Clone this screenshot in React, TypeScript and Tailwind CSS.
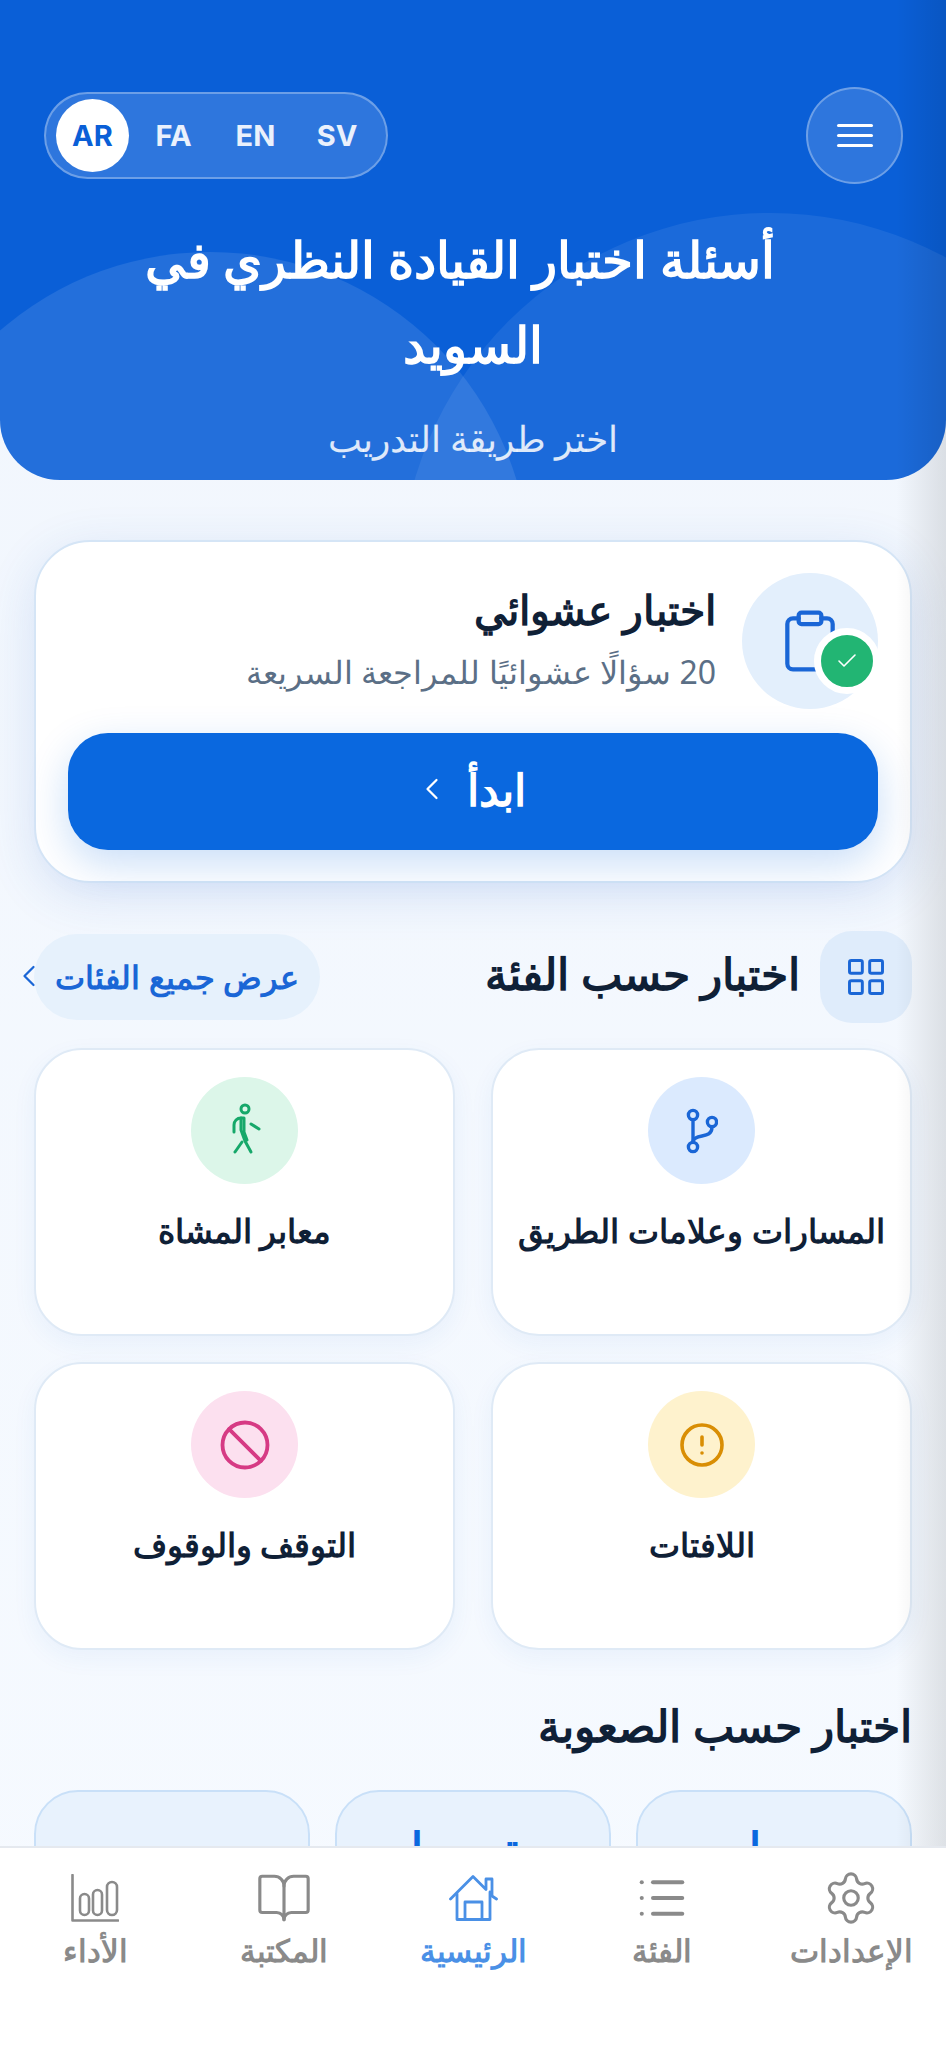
import { Ban, BookOpen, ChevronLeft, CircleAlert, Clipboard, LayoutGrid, List, Settings, Check } from 'lucide-react';

function BranchIcon() {
  return (
    <svg width="32" height="46" viewBox="0 0 32 46" fill="none" stroke="#1a66d6" strokeWidth="3.4" strokeLinecap="round" strokeLinejoin="round">
      <circle cx="7" cy="7" r="4.6" />
      <circle cx="26" cy="14" r="4.6" />
      <circle cx="7" cy="39" r="4.6" />
      <path d="M7 12v22" />
      <path d="M26 19c0 7-5 8-10 9-5 1-9 2-9 6" />
    </svg>
  );
}

function WalkIcon() {
  return (
    <svg width="48" height="56" viewBox="0 0 48 56" fill="none" stroke="#16a86a" strokeWidth="3" strokeLinecap="round" strokeLinejoin="round">
      <circle cx="24" cy="6" r="4" />
      <path d="M13 29v-7c0-4 3-7 7-7h3v14l3 8" />
      <path d="M20 15v12l4 11 6 11" />
      <path d="M30 21l8 5" />
      <path d="M21 39l-7 10" />
    </svg>
  );
}

function HomeIcon() {
  return (
    <svg width="49" height="46" viewBox="0 0 49 46" fill="none" stroke="currentColor" strokeWidth="2.8" strokeLinejoin="round" strokeLinecap="round">
      <path d="M1.5 24L24 1.5l13 13V4h6v17l4.5 3" />
      <path d="M8 19v25.5h33V17" />
      <path d="M16 44.5V27h17v17.5" />
    </svg>
  );
}

function ChartIcon() {
  return (
    <svg width="48" height="48" viewBox="0 0 48 48" fill="none" stroke="currentColor" strokeWidth="2.6" strokeLinejoin="round" strokeLinecap="round">
      <path d="M1.5 1v45.5H47" />
      <rect x="9" y="20" width="9" height="21" rx="4.5" />
      <rect x="22" y="16" width="9" height="25" rx="4.5" />
      <rect x="36" y="8" width="10" height="33" rx="5" />
    </svg>
  );
}

const categories = [
  { title: 'المسارات وعلامات الطريق', bg: 'bg-[#dbeafe]', icon: <BranchIcon /> },
  { title: 'معابر المشاة', bg: 'bg-[#dcf6e9]', icon: <WalkIcon /> },
  { title: 'اللافتات', bg: 'bg-[#fef2cd]', icon: <CircleAlert className="w-[48px] h-[48px] text-[#d98e04]" strokeWidth={1.8} /> },
  { title: 'التوقف والوقوف', bg: 'bg-[#fce0ef]', icon: <Ban className="w-[54px] h-[54px] text-[#d63a84]" strokeWidth={1.7} /> },
];

const navItems = [
  { label: 'الإعدادات', icon: <Settings className="w-[58px] h-[58px]" strokeWidth={1.3} /> },
  { label: 'الفئة', icon: <List className="w-[54px] h-[54px]" strokeWidth={1.8} /> },
  { label: 'الرئيسية', icon: <HomeIcon />, active: true },
  { label: 'المكتبة', icon: <BookOpen className="w-[58px] h-[58px]" strokeWidth={1.3} /> },
  { label: 'الأداء', icon: <ChartIcon /> },
];

export default function App() {
  return (
    <div dir="rtl" className="relative h-[2048px] w-[946px] flex flex-col overflow-hidden bg-gradient-to-b from-[#f1f6fd] to-[#f6faff] font-['Noto_Sans','Inter',sans-serif]">
      <main className="flex-1 min-h-0 overflow-hidden">
        {/* Header */}
        <header className="relative h-[480px] rounded-b-[60px] overflow-hidden bg-[#0a5fd7] text-white">
          <div className="absolute left-[-110px] top-[252px] w-[640px] h-[640px] rounded-full bg-white/10" />
          <div className="absolute left-[400px] top-[213px] w-[740px] h-[740px] rounded-full bg-white/[0.07]" />
          <div className="relative pt-[87px] pl-[44px] pr-[43px] flex items-center justify-between">
            <button className="w-[97px] h-[97px] rounded-full bg-white/15 border-2 border-white/30 flex flex-col items-center justify-center gap-[7px]">
              <span className="block w-[36px] h-[3px] bg-white rounded" />
              <span className="block w-[36px] h-[3px] bg-white rounded" />
              <span className="block w-[36px] h-[3px] bg-white rounded" />
            </button>
            <div dir="ltr" className="w-[344px] h-[87px] rounded-full bg-white/15 border-2 border-white/30 flex items-center pl-[10px] pr-[8px] font-['Inter',sans-serif] font-bold text-[29px]">
              <span className="w-[73px] h-[73px] rounded-full bg-white text-[#0a5fd7] flex items-center justify-center">AR</span>
              <span className="ml-[4px] w-[82px] text-center text-white/90">FA</span>
              <span className="w-[82px] text-center text-white/90">EN</span>
              <span className="w-[82px] text-center text-white/90">SV</span>
            </div>
          </div>
          <div className="relative mt-[33px] px-[100px] text-center">
            <h1 className="text-[50px] leading-[85px] font-bold">
              <span className="block pr-[26px]">أسئلة اختبار القيادة النظري في</span>
              <span className="block">السويد</span>
            </h1>
            <p className="mt-[27px] text-[36px] leading-[50px] text-white/85">اختر طريقة التدريب</p>
          </div>
        </header>

        <div className="px-[34px]">
          {/* Random test card */}
          <section className="mt-[60px] h-[343px] rounded-[56px] bg-white border-2 border-[#d5e5f6] px-[32px] pt-[31px] shadow-[0_12px_50px_rgba(40,100,200,0.14)]">
            <div className="flex items-start gap-[26px]">
              <div className="relative w-[136px] h-[136px] rounded-full bg-[#e3effc] flex items-center justify-center shrink-0">
                <Clipboard className="w-[68px] h-[68px] text-[#1a66d6]" strokeWidth={1.5} />
                <span className="absolute left-[72px] top-[55px] w-[66px] h-[66px] rounded-full bg-[#22b573] border-[7px] border-white flex items-center justify-center">
                  <Check className="w-[24px] h-[24px] text-white" strokeWidth={1.6} />
                </span>
              </div>
              <div className="pt-[8px]">
                <h2 className="text-[41px] leading-[56px] font-bold text-[#0f2036]">اختبار عشوائي</h2>
                <p className="mt-[13px] text-[32px] leading-[44px] text-[#5b6f86]">20 سؤالًا عشوائيًا للمراجعة السريعة</p>
              </div>
            </div>
            <button className="mt-[24px] w-full h-[117px] rounded-[40px] bg-[#0a68df] text-white flex items-center justify-center gap-[17px] pb-[5px] pr-[6px] shadow-[0_14px_40px_rgba(10,104,223,0.22)]">
              <span className="text-[44px] font-bold">ابدأ</span>
              <ChevronLeft className="w-[36px] h-[36px]" strokeWidth={1.5} />
            </button>
          </section>

          {/* Categories */}
          <div className="mt-[48px] h-[92px] flex items-center justify-between">
            <div className="flex items-center gap-[20px]">
              <span className="w-[92px] h-[92px] rounded-[32px] bg-[#dfecfb] flex items-center justify-center">
                <LayoutGrid className="w-[44px] h-[44px] text-[#1a66d6]" strokeWidth={1.6} />
              </span>
              <h2 className="pb-[8px] text-[44px] font-bold text-[#0f2036]">اختبار حسب الفئة</h2>
            </div>
            <div className="relative">
              <span className="flex items-center w-[286px] justify-center h-[86px] rounded-[43px] bg-[#e6f1fc] text-[32px] font-bold text-[#1a66d6]">عرض جميع الفئات</span>
              <ChevronLeft className="absolute left-[-23px] top-[24px] w-[36px] h-[36px] text-[#1a66d6]" strokeWidth={1.5} />
            </div>
          </div>

          <div className="mt-[25px] grid grid-cols-2 gap-x-[36px] gap-y-[26px]">
            {categories.map((cat) => (
              <div key={cat.title} className="h-[288px] rounded-[48px] bg-white border-2 border-[#dfeaf6] pt-[27px] flex flex-col items-center shadow-[0_8px_24px_rgba(40,100,200,0.06)]">
                <span className={`w-[107px] h-[107px] rounded-full flex items-center justify-center ${cat.bg}`}>{cat.icon}</span>
                <h3 className="mt-[22px] text-[33px] font-bold text-[#0f2036]">{cat.title}</h3>
              </div>
            ))}
          </div>

          <h2 className="mt-[42px] text-[44px] font-bold text-[#0f2036]">اختبار حسب الصعوبة</h2>

          <div className="mt-[32px] grid grid-cols-3 gap-[25px]">
            {['سهل', 'متوسط', 'صعب'].map((level) => (
              <div key={level} className="h-[160px] rounded-[44px] bg-[#e8f2fd] border-2 border-[#c9e0f8] pt-[22px] text-center text-[44px] font-bold text-[#0a68df]">
                {level}
              </div>
            ))}
          </div>
        </div>
      </main>

      {/* Bottom nav */}
      <nav className="relative h-[202px] shrink-0 bg-white border-t-2 border-[#e5e9ef] flex justify-between px-[10px] pt-[22px]">
        {navItems.map((item) => (
          <div key={item.label} className={`w-[170px] flex flex-col items-center ${item.active ? 'text-[#4a90e6]' : 'text-[#8a8a8a]'}`}>
            <span className="h-[56px] flex items-center justify-center">{item.icon}</span>
            <span className="mt-[3px] text-[31px] font-bold leading-[42px]">{item.label}</span>
          </div>
        ))}
      </nav>

      {/* Edge shadow */}
      <div className="absolute top-0 right-0 bottom-[202px] w-[50px] bg-gradient-to-l from-black/10 to-transparent pointer-events-none" />
    </div>
  );
}
